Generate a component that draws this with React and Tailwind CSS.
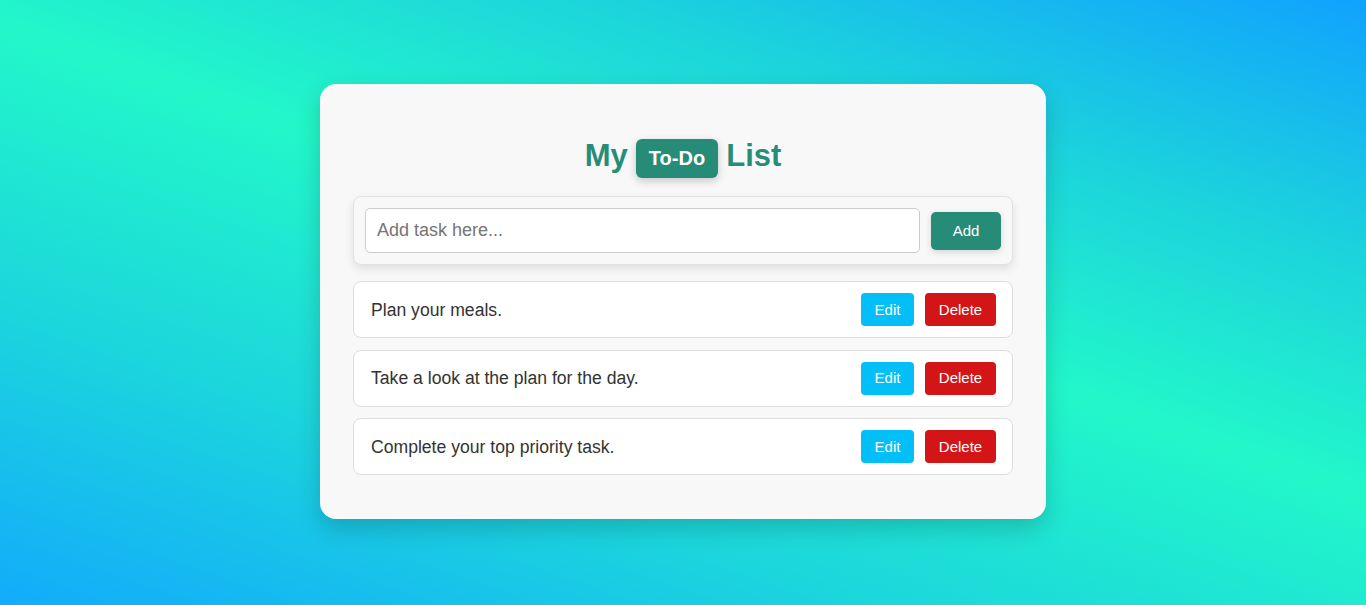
import React from "react";

const tasks = [
  "Plan your meals.",
  "Take a look at the plan for the day.",
  "Complete your top priority task.",
];

export default function App() {
  return (
    <div
      className="w-full h-[605px] flex items-start justify-center pt-[84px] bg-[linear-gradient(199deg,#10a2fe_0%,#1cd3dc_24%,#22f7c9_46%,#1cd6dc_72%,#12abfb_100%)]"
      style={{ fontFamily: '"Liberation Sans", Arial, sans-serif' }}
    >
      <div className="w-[726px] h-[435px] bg-[#f8f8f8] rounded-[16px] shadow-[0_10px_25px_rgba(0,0,0,0.18)] px-[33px] pt-[53px]">
        <h1 className="text-center text-[31px] font-bold text-[#288d78] leading-[37px] mb-[19px]">
          My{" "}
          <span className="inline-block align-middle bg-[#268c77] text-white text-[20px] leading-[23px] px-[12.5px] py-[8px] rounded-[6px] shadow-[0_3px_8px_rgba(0,0,0,0.2)] relative top-[1px]">
            To-Do
          </span>{" "}
          List
        </h1>

        <div className="flex items-center gap-[11px] h-[69px] px-[11px] border border-[#e2e2e2] rounded-[8px] bg-[#f8f8f8] shadow-[0_4px_10px_rgba(0,0,0,0.1)]">
          <input
            type="text"
            placeholder="Add task here..."
            className="flex-1 h-[45px] bg-white border border-[#cccccc] rounded-[5px] px-[11px] text-[18px] text-[#333] placeholder:text-[#757575] outline-none"
          />
          <button className="w-[70px] h-[38px] bg-[#268c77] text-white text-[15px] rounded-[5px] shadow-[0_2px_6px_rgba(0,0,0,0.15)]">
            Add
          </button>
        </div>

        <div className="mt-[16px] flex flex-col gap-[11.5px]">
          {tasks.map((t) => (
            <div
              key={t}
              className="flex items-center justify-between h-[57px] bg-white border border-[#dedede] rounded-[8px] pl-[17px] pr-[16px]"
            >
              <span className="text-[17.6px] text-[#333]">{t}</span>
              <div className="flex gap-[11px]">
                <button className="h-[33px] w-[53px] bg-[#02c0f7] text-white text-[15px] rounded-[4px]">
                  Edit
                </button>
                <button className="h-[33px] w-[71px] bg-[#d41518] text-white text-[15px] rounded-[4px]">
                  Delete
                </button>
              </div>
            </div>
          ))}
        </div>
      </div>
    </div>
  );
}
